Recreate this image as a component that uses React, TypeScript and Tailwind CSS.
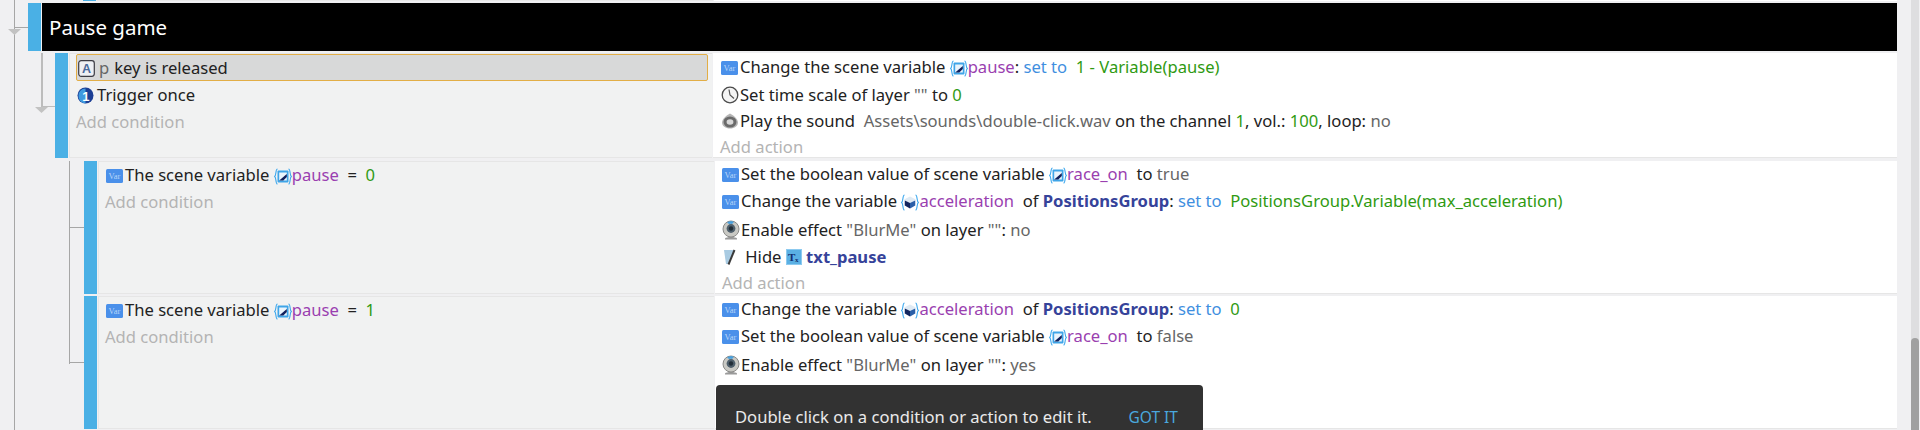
import React from "react";

const VarIcon = () => (
  <svg width="17" height="14" viewBox="0 0 17 14" className="shrink-0 mr-[1px]">
    <rect width="17" height="14" rx="1.5" fill="#4a90ea" />
    <text x="8.5" y="10" fontSize="8.5" textAnchor="middle" fill="#b9d6f8" fontFamily="Liberation Serif, serif">Var</text>
  </svg>
);
const Braces = ({ children }: { children: React.ReactNode }) => (
  <svg width="18" height="17" viewBox="0 0 18 17" className="shrink-0">
    <path d="M3.5 1C1.3 1 2.5 7.5.6 8.5 2.5 9.5 1.3 16 3.5 16M14.5 1C16.7 1 15.5 7.5 17.4 8.5 15.5 9.5 16.7 16 14.5 16" fill="none" stroke="#3fa9ee" strokeWidth="1.1" />
    {children}
  </svg>
);
const SceneIcon = () => (
  <Braces>
    <rect x="3.5" y="2.5" width="11" height="12" rx="1" fill="#3fa5e8" />
    <rect x="5.2" y="4.5" width="7.6" height="8" fill="#eaf4fc" />
    <path d="M5.2 12.5L12.8 6v3l-3.5 3.5z" fill="#12205c" />
  </Braces>
);
const ObjIcon = () => (
  <Braces>
    <path d="M9 2.5l5.5 2.7v6.2L9 14.5l-5.5-3.1V5.2z" fill="#dfeaf4" />
    <path d="M3.8 6.5L9 9v5.5l-5.2-3z" fill="#13265f" />
    <path d="M14.2 6.5L9 9v5.5l5.2-3z" fill="#2b5fa8" />
  </Braces>
);
const ClockIcon = () => (
  <svg width="18" height="18" viewBox="0 0 18 18" className="shrink-0">
    <circle cx="9" cy="9" r="7.8" fill="#f4f4f4" stroke="#4a4a4a" strokeWidth="1.3" />
    <path d="M8 3.5L9 9l4 3.5" fill="none" stroke="#555" strokeWidth="1.2" />
  </svg>
);
const SoundIcon = () => (
  <svg width="18" height="18" viewBox="0 0 18 18" className="shrink-0">
    <path d="M9 1.5C12 3 17 7 17 10.5c0 3.5-3.5 6-8 6s-8-2.5-8-6C1 7 6 3 9 1.5z" fill="#b5b5b5" />
    <ellipse cx="9" cy="10" rx="6.5" ry="5.6" fill="#6a6a6a" />
    <ellipse cx="9" cy="10" rx="3.4" ry="2.8" fill="#d8d8d8" />
  </svg>
);
const CamIcon = () => (
  <svg width="18" height="20" viewBox="0 0 18 20" className="shrink-0">
    <path d="M3 18.5c1-2 11-2 12 0v1H3z" fill="#9a9a9a" />
    <circle cx="9" cy="9" r="8" fill="#c9c9c4" stroke="#8a8a88" />
    <circle cx="9" cy="8.5" r="4.4" fill="#50606c" />
    <circle cx="9" cy="8.5" r="2.2" fill="#222e38" />
    <path d="M5 2.5a6 6 0 0 1 7-.5l-2 2a4 4 0 0 0-3 0z" fill="#4aa0dc" />
  </svg>
);
const PenIcon = () => (
  <svg width="15" height="18" viewBox="0 0 15 18" className="shrink-0 mr-[3px]">
    <path d="M2 2h10L6 16H4z" fill="#a9cbe2" />
    <path d="M12.5 2L6.5 16.5" stroke="#3a3a3a" strokeWidth="2" />
  </svg>
);
const TxIcon = () => (
  <svg width="16" height="16" viewBox="0 0 16 16" className="shrink-0">
    <rect x="0.5" y="0.5" width="15" height="15" fill="#5ab0e4" stroke="#8ccaf0" />
    <text x="2" y="12" fontSize="11" fontWeight="700" fill="#132e70" fontFamily="Liberation Serif, serif">T</text>
    <text x="9" y="13" fontSize="7" fontWeight="700" fill="#132e70" fontFamily="Liberation Serif, serif">x</text>
  </svg>
);
const KeyIcon = () => (
  <svg width="17" height="17" viewBox="0 0 17 17" className="shrink-0">
    <rect x="0.7" y="0.7" width="15.6" height="15.6" rx="2.5" fill="#eef0f4" stroke="#3c3c44" strokeWidth="1.2" />
    <text x="8.5" y="13" fontSize="12.5" fontWeight="700" textAnchor="middle" fill="#4a6a9c" fontFamily="Liberation Sans, sans-serif">A</text>
  </svg>
);
const OnceIcon = () => (
  <svg width="17" height="17" viewBox="0 0 17 17" className="shrink-0 mr-[2px]">
    <circle cx="8.5" cy="8.5" r="8" fill="#1c3f95" />
    <path d="M1.5 8.5a7 7 0 0 1 7-7v15a7 7 0 0 1-7-8z" fill="#3f9ae0" />
    <text x="8.8" y="13.5" fontSize="13" fontWeight="700" textAnchor="middle" fill="#fff" fontFamily="Liberation Sans, sans-serif">1</text>
  </svg>
);
const Arrow = () => (
  <svg width="13" height="6" viewBox="0 0 13 6" className="block">
    <path d="M0 0h13L6.5 6z" fill="#c2c2c2" />
  </svg>
);

const V = ({ c }: { c: string }) => <span className="text-[#9a3fb0]">{c}</span>;
const G = ({ c }: { c: string }) => <span className="text-[#2f9a12]">{c}</span>;
const B = ({ c }: { c: string }) => <span className="text-[#3f8fe0]">{c}</span>;
const P = ({ c }: { c: string }) => <span className="text-[#666666]">{c}</span>;
const O = ({ c }: { c: string }) => <span className="font-bold text-[#36439a]">{c}</span>;

const Inl = ({ children }: { children: React.ReactNode }) => <span className="inline-block align-middle -mt-[2px]">{children}</span>;
const SceneIcon2 = () => <Inl><SceneIcon /></Inl>;
const ObjIcon2 = () => <Inl><ObjIcon /></Inl>;
const TxIcon2 = () => <Inl><TxIcon /></Inl>;

const Line = ({ icon, children, h = "h-[26px]" }: { icon: React.ReactNode; children: React.ReactNode; h?: string }) => (
  <div className={`flex items-center whitespace-pre ${h}`}>
    {icon}
    <span className="ml-[1px]">{children}</span>
  </div>
);
const AddLine = ({ c }: { c: string }) => <div className="h-[26px] flex items-center text-[#b4b4b4]">{c}</div>;

const Event = ({ width, conds, actions, h }: { width: string; conds: React.ReactNode; actions: React.ReactNode; h: string }) => (
  <div className={`flex ${h} min-w-0 flex-1`}>
    <div className="w-[13px] shrink-0 bg-[#4ab0e5]" />
    <div className={`${width} shrink-0 ml-[1px] bg-[#f1f2f2] border-t border-l border-b border-[#e6e6e6] overflow-hidden`}>{conds}</div>
    <div className="flex-1 ml-[1px] bg-white border-b border-[#e6e6e6] pl-[7px] pt-[1px] overflow-hidden">{actions}</div>
  </div>
);

const Connector = ({ up, width }: { up: string; width: string }) => (
  <div className={`${width} shrink-0`}>
    <div className={`${up} border-b border-[#a6a6a6]`} />
  </div>
);

export default function App() {
  return (
    <div className="relative h-[430px] w-full overflow-hidden flex bg-[#f0f0f2] text-[16.6px] leading-none text-[#222222] font-['Noto_Sans','Open_Sans',sans-serif]">
      <div className="flex-1 min-w-0 ml-[14px] border-l border-[#a6a6a6] pr-[14px] h-[460px]">
        <div className="h-[1px] ml-[68px] flex">
          <div className="w-[13px] bg-[#4ab0e5]" />
          <div className="w-[616px] ml-[1px] bg-[#e8e8e8]" />
          <div className="flex-1 ml-[1px] bg-[#ffffff]" />
        </div>
        {/* Group header */}
        <div className="flex mt-[2px] h-[48px]">
          <div className="w-[13px] shrink-0 relative">
            <div className="h-[25px] border-b border-[#a6a6a6]" />
            <div className="absolute left-[-7px] top-[26px]"><Arrow /></div>
          </div>
          <div className="w-[13px] shrink-0 bg-[#4ab0e5]" />
          <div className="flex-1 ml-[1px] bg-black text-white text-[20.5px] flex items-center pl-[7px] pt-[1px]">Pause game</div>
        </div>
        {/* Main event */}
        <div className="flex mt-[2px] ml-[26px]">
          <div className="w-[14px] shrink-0 relative h-[105px]">
            <div className="h-[54px] border-l-2 border-b border-[#bcbcbc]" />
            <div className="absolute left-[-6px] top-[54px]"><Arrow /></div>
          </div>
          <Event
            h="h-[105px]"
            width="w-[643px]"
            conds={
              <div className="pl-[6px] pr-[4px]">
                <div className="h-[27px] flex items-center bg-[#d8d9d9] border-[1.5px] border-[#e2ae46] rounded-[2px] whitespace-pre pl-[1px] pt-[1px]">
                  <KeyIcon /><span className="ml-[4px] text-[#666666]">p</span><span className="ml-[5px]">key is released</span>
                </div>
                <div className="pl-[1px]"><Line icon={<OnceIcon />} h="h-[28px]">Trigger once</Line></div>
                <AddLine c="Add condition" />
              </div>
            }
            actions={
              <>
                <div className="pl-[1px]">
                  <Line icon={<VarIcon />} h="h-[28px]">Change the scene variable <SceneIcon2 /><V c="pause" />: <B c="set to" />  <G c="1 - Variable(pause)" /></Line>
                  <Line icon={<ClockIcon />}>Set time scale of layer <P c={'""'} /> to <G c="0" /></Line>
                  <Line icon={<SoundIcon />}>Play the sound  <P c="Assets\sounds\double-click.wav" /> on the channel <G c="1" />, vol.: <G c="100" />, loop: <P c="no" /></Line>
                </div>
                <AddLine c="Add action" />
              </>
            }
          />
        </div>
        {/* Sub events */}
        <div className="mt-[3px] ml-[54px] border-l border-[#a6a6a6] h-[203px] relative">
          <div className="flex h-[133px]">
            <Connector width="w-[14px]" up="h-[67px]" />
            <Event
              h="h-[133px]"
              width="w-[616px]"
              conds={
                <div className="pl-[6px] pt-[1px]">
                  <div className="pl-[1px]"><Line icon={<VarIcon />}>The scene variable <SceneIcon2 /><V c="pause" />  =  <G c="0" /></Line></div>
                  <AddLine c="Add condition" />
                </div>
              }
              actions={
                <>
                  <Line icon={<VarIcon />}>Set the boolean value of scene variable <SceneIcon2 /><V c="race_on" />  to <P c="true" /></Line>
                  <Line icon={<VarIcon />} h="h-[28px]">Change the variable <ObjIcon2 /><V c="acceleration" />  of <O c="PositionsGroup" />: <B c="set to" />  <G c="PositionsGroup.Variable(max_acceleration)" /></Line>
                  <Line icon={<CamIcon />} h="h-[28px]">Enable effect <P c={'"BlurMe"'} /> on layer <P c={'""'} />: <P c="no" /></Line>
                  <Line icon={<PenIcon />} h="h-[26px]"> Hide <TxIcon2 /> <O c="txt_pause" /></Line>
                  <AddLine c="Add action" />
                </>
              }
            />
          </div>
          <div className="flex h-[133px] mt-[2px]">
            <Connector width="w-[14px]" up="h-[67px]" />
            <Event
              h="h-[133px]"
              width="w-[616px]"
              conds={
                <div className="pl-[6px] pt-[1px]">
                  <div className="pl-[1px]"><Line icon={<VarIcon />}>The scene variable <SceneIcon2 /><V c="pause" />  =  <G c="1" /></Line></div>
                  <AddLine c="Add condition" />
                </div>
              }
              actions={
                <>
                  <Line icon={<VarIcon />}>Change the variable <ObjIcon2 /><V c="acceleration" />  of <O c="PositionsGroup" />: <B c="set to" />  <G c="0" /></Line>
                  <Line icon={<VarIcon />} h="h-[28px]">Set the boolean value of scene variable <SceneIcon2 /><V c="race_on" />  to <P c="false" /></Line>
                  <Line icon={<CamIcon />} h="h-[28px]">Enable effect <P c={'"BlurMe"'} /> on layer <P c={'""'} />: <P c="yes" /></Line>
                </>
              }
            />
          </div>
        </div>
      </div>
      {/* Scrollbar */}
      <div className="w-[8px] shrink-0 mr-[1px] bg-[#dedee0] flex flex-col justify-end">
        <div className="h-[92px] bg-[#a0a0a0] rounded-t-[4px]" />
      </div>
      {/* Toast */}
      <div className="absolute left-[716px] top-[385px] w-[487px] h-[60px] bg-[#323232] rounded-[4px] text-white/90 flex items-start justify-between pl-[19px] pr-[25px] pt-[24px]">
        <span>Double click on a condition or action to edit it.</span>
        <span className="text-[#4aa8de] text-[15.5px] pt-[1px]">GOT IT</span>
      </div>
    </div>
  );
}
